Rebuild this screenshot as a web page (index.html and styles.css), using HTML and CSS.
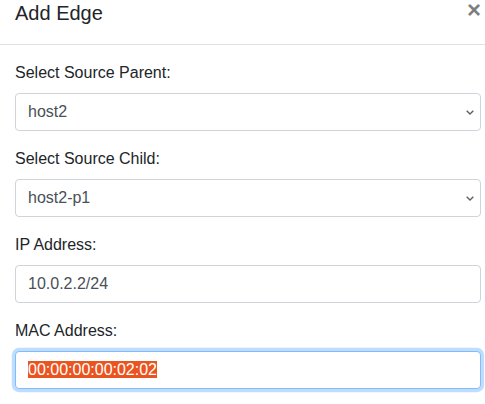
FILE: index.html
```html
<!DOCTYPE html>
<html lang="en">
<head>
<meta charset="utf-8">
<title>Add Edge</title>
<link rel="stylesheet" href="styles.css">
</head>
<body>
<div class="modal-content">
  <div class="modal-header">
    <h5 class="modal-title">Add Edge</h5>
    <button type="button" class="close" aria-label="Close"><span aria-hidden="true">&times;</span></button>
  </div>
  <div class="modal-body">
    <div class="form-group">
      <label class="label">Select Source Parent:</label>
      <select class="form-control"><option>host2</option></select>
    </div>
    <div class="form-group">
      <label class="label">Select Source Child:</label>
      <select class="form-control"><option>host2-p1</option></select>
    </div>
    <div class="form-group">
      <label class="label">IP Address:</label>
      <input class="form-control" type="text" value="10.0.2.2/24">
    </div>
    <div class="form-group">
      <label class="label">MAC Address:</label>
      <div class="form-control focused"><span class="selected">00:00:00:00:02:02</span></div>
    </div>
  </div>
</div>
</body>
</html>
```

FILE: styles.css
```css
html, body {
  margin: 0;
  padding: 0;
  background: #fff;
  overflow: hidden;
}
body {
  font-family: "Liberation Sans", Arial, sans-serif;
  font-size: 16px;
  line-height: 1.5;
  color: #212529;
}
.modal-content {
  width: 500px;
  box-sizing: border-box;
  margin: -19px 0 0 -2px;
  border: 1px solid rgba(0,0,0,.2);
  border-radius: 4.8px;
  background: #fff;
}
.modal-header {
  display: flex;
  align-items: flex-start;
  justify-content: space-between;
  padding: 16px;
  border-bottom: 1px solid #dee2e6;
}
.modal-title {
  margin: 0;
  font-size: 20px;
  font-weight: 500;
  line-height: 1.5;
}
.close {
  padding: 16px;
  margin: -16px -16px -16px auto;
  background: transparent;
  border: 0;
  font-family: "Liberation Sans", Arial, sans-serif;
  font-size: 24px;
  font-weight: 700;
  line-height: 1;
  color: #000;
  opacity: .5;
  text-shadow: 0 1px 0 #fff;
  cursor: pointer;
}
.modal-body {
  padding: 16px;
}
.form-group {
  display: flex;
  flex-direction: column;
  margin-bottom: 16px;
}
.label {
  display: block;
  margin-bottom: 8px;
}
.form-control {
  display: block;
  width: 100%;
  height: 38px;
  box-sizing: border-box;
  padding: 6px 12px;
  font-family: "Liberation Sans", Arial, sans-serif;
  font-size: 16px;
  line-height: 1.5;
  color: #495057;
  background: #fff;
  border: 1px solid #ced4da;
  border-radius: 4px;
  margin: 0;
}
select.form-control {
  -webkit-appearance: none;
  appearance: none;
  padding-right: 24px;
  background-image: url("data:image/svg+xml;utf8,<svg xmlns='http://www.w3.org/2000/svg' width='8' height='5' viewBox='0 0 8 5'><path d='M0.7 0.7 L4 4 L7.3 0.7' fill='none' stroke='%23606060' stroke-width='1.4'/></svg>");
  background-repeat: no-repeat;
  background-position: right 6px center;
  background-size: 8px 5px;
}
.focused {
  border-color: #80bdff;
  box-shadow: 0 0 0 3.2px rgba(0,123,255,.25);
}
.selected {
  background: #e95420;
  color: #fff;
}
```
